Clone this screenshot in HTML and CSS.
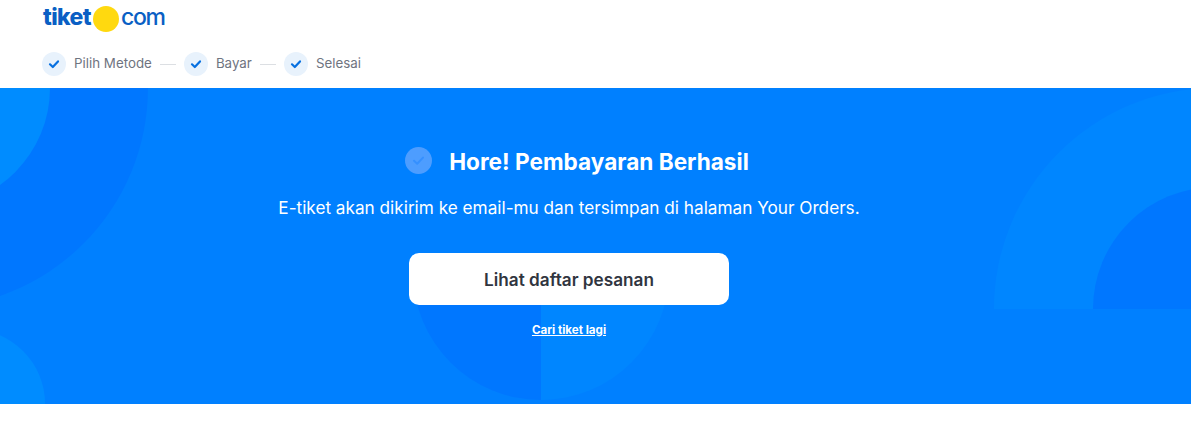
FILE: index.html
```html
<!DOCTYPE html>
<html lang="id">
<head>
<meta charset="utf-8">
<title>tiket.com</title>
<link rel="stylesheet" href="styles.css">
</head>
<body>
<header class="topbar">
  <div class="logo"><span class="logo-word">tiket</span><span class="logo-dot"></span><span class="logo-com">com</span></div>
  <ol class="steps">
    <li class="step"><svg class="step-icon" viewBox="0 0 24 24"><circle cx="12" cy="12" r="12" fill="#e8f2fc"/><path d="M8 12.3l2.8 2.7 5.2-5.6" fill="none" stroke="#0770e0" stroke-width="2.2" stroke-linecap="round" stroke-linejoin="round"/></svg><span class="step-label">Pilih Metode</span></li>
    <li class="dash"></li>
    <li class="step"><svg class="step-icon" viewBox="0 0 24 24"><circle cx="12" cy="12" r="12" fill="#e8f2fc"/><path d="M8 12.3l2.8 2.7 5.2-5.6" fill="none" stroke="#0770e0" stroke-width="2.2" stroke-linecap="round" stroke-linejoin="round"/></svg><span class="step-label">Bayar</span></li>
    <li class="dash"></li>
    <li class="step"><svg class="step-icon" viewBox="0 0 24 24"><circle cx="12" cy="12" r="12" fill="#e8f2fc"/><path d="M8 12.3l2.8 2.7 5.2-5.6" fill="none" stroke="#0770e0" stroke-width="2.2" stroke-linecap="round" stroke-linejoin="round"/></svg><span class="step-label">Selesai</span></li>
  </ol>
</header>
<main class="hero">
  <svg class="hero-art" viewBox="0 0 1191 316" width="1191" height="316" aria-hidden="true">
    <circle cx="-72" cy="0" r="220" fill="#0077ff"/>
    <circle cx="-69" cy="0" r="119" fill="#008cff"/>
    <circle cx="-30" cy="316" r="75" fill="#008cff"/>
    <path d="M994 221A221 221 0 0 1 1215 0V221Z" fill="#0086ff"/>
    <path d="M1093 221A122 122 0 0 1 1215 99V221Z" fill="#0077ff"/>
    <path d="M541 184H413A128 128 0 0 0 541 312Z" fill="#0077ff"/>
    <path d="M541 184H669A128 128 0 0 1 541 312Z" fill="#0086ff"/>
  </svg>
  <div class="hero-content">
    <div class="title-row">
      <svg class="title-icon" viewBox="0 0 27 27"><circle cx="13.5" cy="13.5" r="13.5" fill="#4d9dff"/><path d="M9 13.8l3.2 3 5.8-6.2" fill="none" stroke="#3590ff" stroke-width="2" stroke-linecap="round" stroke-linejoin="round"/></svg>
      <h1 class="title">Hore! Pembayaran Berhasil</h1>
    </div>
    <p class="subtitle">E-tiket akan dikirim ke email-mu dan tersimpan di halaman Your Orders.</p>
    <a class="primary-btn" href="#">Lihat daftar pesanan</a>
    <a class="again-link" href="#">Cari tiket lagi</a>
  </div>
</main>
</body>
</html>
```

FILE: styles.css
```css
* { box-sizing: border-box; }
html, body { margin: 0; padding: 0; background: #fff; }
body { font-family: "Inter", "Liberation Sans", sans-serif; }

.topbar { height: 88px; padding: 6px 0 0 42px; }

.logo { display: flex; align-items: center; height: 26px; color: #0a5fc4; }
.logo-word { width: 50px; margin: 0 0 4px 1px; font-size: 23px; font-weight: 800; letter-spacing: -0.6px; line-height: 22px; }
.logo-dot { width: 26px; height: 26px; border-radius: 50%; background: #ffd90f; }
.logo-com { margin: 0 0 4px 2px; font-size: 23px; font-weight: 500; letter-spacing: -1.3px; line-height: 22px; }

.steps { display: flex; align-items: center; gap: 8px; margin: 20px 0 0; padding: 0; list-style: none; }
.step { display: flex; align-items: center; gap: 8px; font-size: 13.35px; color: #6f7480; line-height: 24px; }
.step-label { margin-top: -2px; }
.step-icon { display: block; width: 24px; height: 24px; }
.dash { width: 16px; height: 1px; background: #dcdfe3; }

.hero { position: relative; height: 316px; padding: 59px 53px 0 0; overflow: hidden; background: #0080ff; color: #fff; }
.hero-art { position: absolute; left: 0; top: 0; display: block; }
.hero-content { position: relative; display: flex; flex-direction: column; align-items: center; }

.title-row { display: flex; align-items: center; gap: 17px; height: 30px; margin-left: 16px; }
.title-icon { display: block; width: 27px; height: 27px; margin-top: -4px; }
.title { margin: 0; font-size: 22.6px; font-weight: 700; line-height: 30px; white-space: nowrap; }
.subtitle { margin: 19px 0 0; font-size: 17.2px; font-weight: 400; line-height: 24px; white-space: nowrap; }

.primary-btn { display: flex; align-items: center; justify-content: center; width: 320px; height: 52px; margin-top: 33px; border-radius: 10px; background: #fff; color: #30353f; font-size: 17.2px; font-weight: 600; text-decoration: none; }
.again-link { margin-top: 18px; color: #fff; font-size: 11.6px; font-weight: 700; line-height: 14px; text-decoration: underline; }
```
